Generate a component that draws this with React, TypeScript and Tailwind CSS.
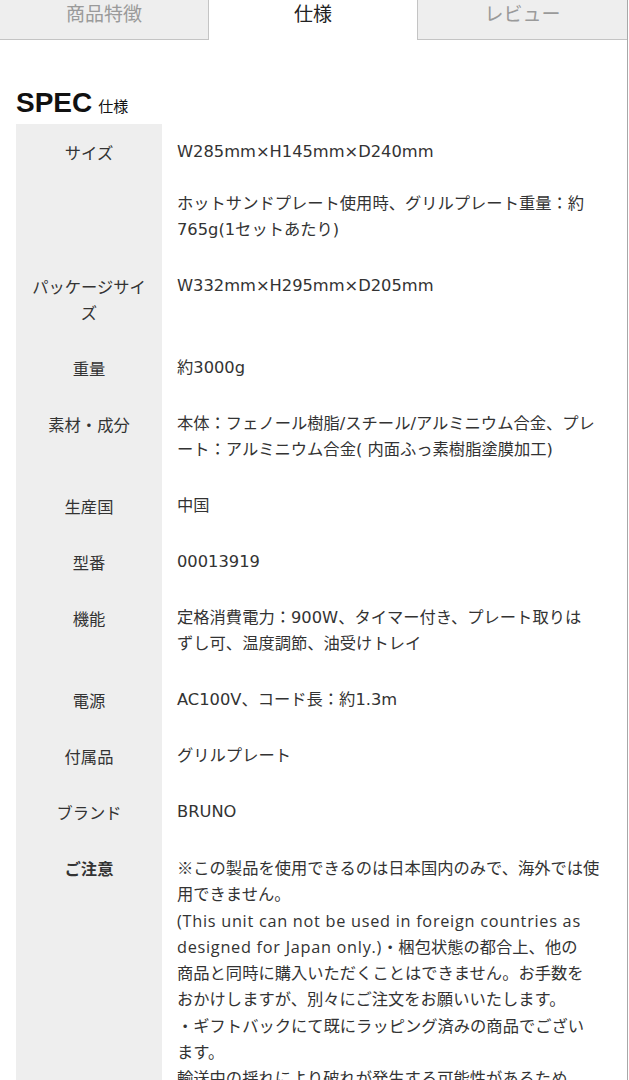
import React from "react";

const jp = '"Noto Sans CJK JP", sans-serif';
const specFont = '"DejaVu Sans", "Noto Sans CJK JP", sans-serif';
const noteFont = '"Open Sans", "Noto Sans CJK JP", sans-serif';

type Row = { label: string; value: React.ReactNode; bold?: boolean; note?: boolean };

const En = ({ children }: { children: React.ReactNode }) => (
  <span className="tracking-[0.72px]">{children}</span>
);

const rows: Row[] = [
  {
    label: "サイズ",
    value: (
      <>
        W285mm×H145mm×D240mm
        <br />
        <br />
        ホットサンドプレート使用時、グリルプレート重量：約
        <br />
        765g(1セットあたり)
      </>
    ),
  },
  { label: "パッケージサイズ", value: "W332mm×H295mm×D205mm" },
  { label: "重量", value: "約3000g" },
  {
    label: "素材・成分",
    value: (
      <>
        本体：フェノール樹脂/スチール/アルミニウム合金、プレ
        <br />
        ート：アルミニウム合金( 内面ふっ素樹脂塗膜加工)
      </>
    ),
  },
  { label: "生産国", value: "中国" },
  { label: "型番", value: "00013919" },
  {
    label: "機能",
    value: (
      <>
        定格消費電力：900W、タイマー付き、プレート取りは
        <br />
        ずし可、温度調節、油受けトレイ
      </>
    ),
  },
  { label: "電源", value: "AC100V、コード長：約1.3m" },
  { label: "付属品", value: "グリルプレート" },
  { label: "ブランド", value: "BRUNO" },
  {
    label: "ご注意",
    bold: true,
    note: true,
    value: (
      <>
        ※この製品を使用できるのは日本国内のみで、海外では使
        <br />
        用できません。
        <br />
        <En>(This unit can not be used in foreign countries as</En>
        <br />
        <En>designed for Japan only.)</En>・梱包状態の都合上、他の
        <br />
        商品と同時に購入いただくことはできません。お手数を
        <br />
        おかけしますが、別々にご注文をお願いいたします。
        <br />
        ・ギフトバックにて既にラッピング済みの商品でござい
        <br />
        ます。
        <br />
        輸送中の揺れにより破れが発生する可能性があるため、
        <br />
        あらかじめご了承ください。
      </>
    ),
  },
];

function Tabs() {
  return (
    <div className="flex h-[40px]" style={{ fontFamily: jp }}>
      <div className="w-[209px] border-b border-r border-[#c4c4c4] bg-[#eeeeee] pt-[1px] text-center text-[19px] leading-[24px] text-[#9a9a9a]">
        商品特徴
      </div>
      <div className="w-[209px] border-r border-[#c4c4c4] bg-white pt-[1px] text-center text-[19px] leading-[24px] text-[#222]">
        仕様
      </div>
      <div className="flex-1 border-b border-[#c4c4c4] bg-[#eeeeee] pt-[1px] text-center text-[19px] leading-[24px] text-[#9a9a9a]">
        レビュー
      </div>
    </div>
  );
}

export default function App() {
  return (
    <div className="min-h-screen w-[628px] overflow-hidden border-r border-[#a8a8a8] bg-white">
      <Tabs />
      <div className="pl-4 pr-[16px]">
        <div className="mt-[49px] mb-[7px] flex items-baseline gap-[6px] text-[#111]">
          <span className="text-[28px] font-bold leading-[28px]" style={{ fontFamily: '"Liberation Sans", sans-serif' }}>
            SPEC
          </span>
          <span className="text-[15px] leading-[15px]" style={{ fontFamily: jp }}>
            仕様
          </span>
        </div>
        <div className="flex flex-col">
          {rows.map((row) => (
            <div key={row.label} className="flex">
              <div
                className={`w-[146px] shrink-0 bg-[#eeeeee] px-[10px] py-[15px] text-center text-[16.3px] text-[#333] ${
                  row.bold ? "font-bold" : ""
                } ${row.note ? "leading-[26.3px]" : "leading-[26px]"}`}
                style={{ fontFamily: jp }}
              >
                {row.label}
              </div>
              <div
                className={`flex-1 whitespace-nowrap py-[15px] pl-[15px] pr-[4px] text-[16.3px] text-[#333] ${
                  row.note ? "leading-[26.3px]" : "leading-[26px]"
                }`}
                style={{ fontFamily: row.note ? noteFont : specFont }}
              >
                {row.value}
              </div>
            </div>
          ))}
        </div>
      </div>
    </div>
  );
}
